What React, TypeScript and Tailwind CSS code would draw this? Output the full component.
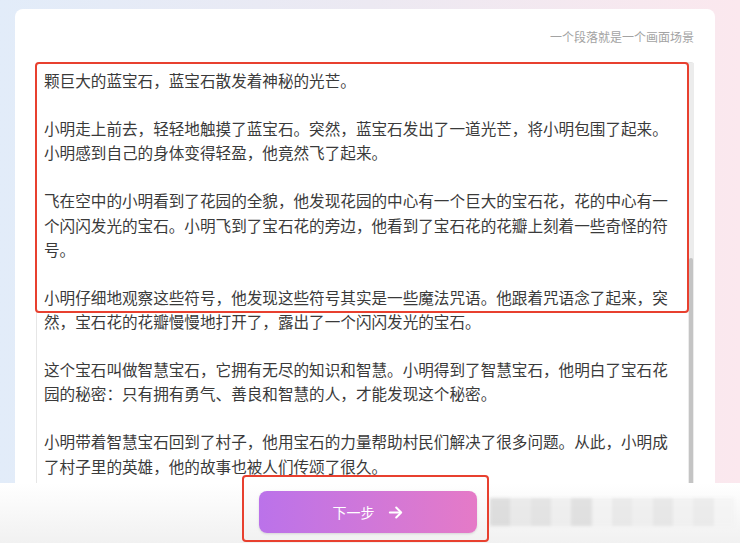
const paragraphs = [
  "颗巨大的蓝宝石，蓝宝石散发着神秘的光芒。",
  "小明走上前去，轻轻地触摸了蓝宝石。突然，蓝宝石发出了一道光芒，将小明包围了起来。小明感到自己的身体变得轻盈，他竟然飞了起来。",
  "飞在空中的小明看到了花园的全貌，他发现花园的中心有一个巨大的宝石花，花的中心有一个闪闪发光的宝石。小明飞到了宝石花的旁边，他看到了宝石花的花瓣上刻着一些奇怪的符号。",
  "小明仔细地观察这些符号，他发现这些符号其实是一些魔法咒语。他跟着咒语念了起来，突然，宝石花的花瓣慢慢地打开了，露出了一个闪闪发光的宝石。",
  "这个宝石叫做智慧宝石，它拥有无尽的知识和智慧。小明得到了智慧宝石，他明白了宝石花园的秘密：只有拥有勇气、善良和智慧的人，才能发现这个秘密。",
  "小明带着智慧宝石回到了村子，他用宝石的力量帮助村民们解决了很多问题。从此，小明成了村子里的英雄，他的故事也被人们传颂了很久。",
];

// blurred tiles next to the button
const tiles = [
  "#d2d2d2", "#e3e3e3", "#dadada", "#e9e9e9", "#d6d6d6", "#f0f0f0", "#e3e3e3",
  "#ebebeb", "#e0e0e0", "#eeeeee", "#e5e5e5", "#f2f2f2",
];

export default function App() {
  return (
    <div
      className="relative flex h-[545px] w-[740px] flex-col overflow-hidden bg-gradient-to-r from-[#e2ecf9] via-[#ece9f2] to-[#fbe8ee]"
      style={{ fontFamily: '"Noto Sans CJK SC", "Noto Sans", sans-serif' }}
    >
      <div className="h-[483px] overflow-hidden pl-[15px] pr-[25px] pt-[9px]">
        <div className="h-[560px] rounded-lg bg-white pl-[21px] pr-[21px] pt-[20px]">
          <p className="text-right text-[12px] leading-[16px] text-[#a3a3a3]">
            一个段落就是一个画面场景
          </p>
          <div className="mt-[17px] flex h-[480px] rounded-[3px] border-l border-t border-[#e6e6e6]">
            <div className="flex-1 pl-[7px] pt-[5px]">
              <div className="flex w-[636px] flex-col gap-[24.1px] text-[15.6px] leading-[24.1px] text-[#3a3a3a]">
                {paragraphs.map((p) => (
                  <p key={p}>{p}</p>
                ))}
              </div>
            </div>
            <div className="flex w-[6px] flex-col bg-[#ececec]">
              <div className="h-[195px]" />
              <div className="mx-auto h-[260px] w-[4px] rounded-sm bg-[#c4c4c4]" />
            </div>
          </div>
        </div>
      </div>

      <div className="flex flex-1 items-center bg-gradient-to-b from-white to-[#f1f1f1] pb-[2px]">
        <div className="w-[259px]" />
        <button className="flex h-[42px] w-[218px] items-center justify-center gap-[12px] rounded-lg bg-gradient-to-r from-[#bb72ea] to-[#e57ac7] text-[14px] text-white shadow-sm">
          <span>下一步</span>
          <svg width="17" height="17" viewBox="0 0 24 24" fill="none" stroke="white" strokeWidth="2.8" strokeLinecap="round" strokeLinejoin="round">
            <path d="M4 12h15" />
            <path d="M13 5l7 7-7 7" />
          </svg>
        </button>
        <div className="ml-[13px] flex h-[28px] flex-1 blur-[1.5px]">
          {tiles.map((c, i) => (
            <div key={i} className="h-full flex-1" style={{ backgroundColor: c, opacity: 0.7 }} />
          ))}
        </div>
        <div className="w-[6px]" />
      </div>
      <div className="h-[2px] bg-white" />

      {/* red highlight frames */}
      <div className="pointer-events-none absolute left-[35px] top-[62px] h-[251px] w-[654px] rounded-[4px] border-2 border-[#e8402f]" />
      <div className="pointer-events-none absolute left-[242px] top-[475px] h-[67px] w-[247px] rounded-[4px] border-2 border-[#e8402f]" />
    </div>
  );
}
